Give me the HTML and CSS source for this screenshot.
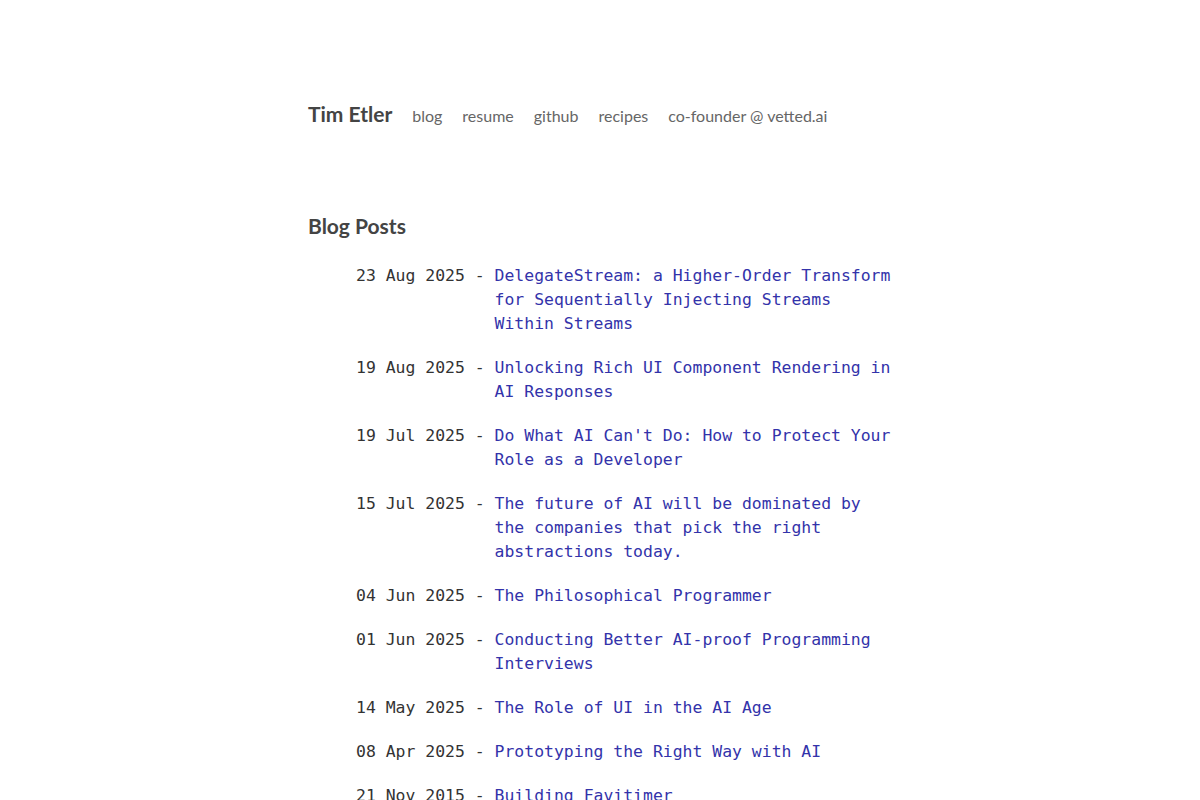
FILE: index.html
```html
<!DOCTYPE html>
<html lang="en">
<head>
<meta charset="utf-8">
<title>Tim Etler</title>
<link rel="stylesheet" href="styles.css">
</head>
<body>
<div class="page">
  <header class="site-header">
    <a class="site-title" href="#">Tim Etler</a>
    <nav class="site-nav">
      <a href="#">blog</a>
      <a href="#">resume</a>
      <a href="#">github</a>
      <a href="#">recipes</a>
      <a href="#">co-founder @ vetted.ai</a>
    </nav>
  </header>
  <main>
    <h2 class="section-title">Blog Posts</h2>
    <ul class="posts">
      <li><span class="date">23 Aug 2025 -&nbsp;</span><a href="#">DelegateStream: a Higher-Order Transform for Sequentially Injecting Streams Within Streams</a></li>
      <li><span class="date">19 Aug 2025 -&nbsp;</span><a href="#">Unlocking Rich UI Component Rendering in AI Responses</a></li>
      <li><span class="date">19 Jul 2025 -&nbsp;</span><a href="#">Do What AI Can't Do: How to Protect Your Role as a Developer</a></li>
      <li><span class="date">15 Jul 2025 -&nbsp;</span><a href="#">The future of AI will be dominated by the companies that pick the right abstractions today.</a></li>
      <li><span class="date">04 Jun 2025 -&nbsp;</span><a href="#">The Philosophical Programmer</a></li>
      <li><span class="date">01 Jun 2025 -&nbsp;</span><a href="#">Conducting Better AI-proof Programming Interviews</a></li>
      <li><span class="date">14 May 2025 -&nbsp;</span><a href="#">The Role of UI in the AI Age</a></li>
      <li><span class="date">08 Apr 2025 -&nbsp;</span><a href="#">Prototyping the Right Way with AI</a></li>
      <li><span class="date">21 Nov 2015 -&nbsp;</span><a href="#">Building Favitimer</a></li>
    </ul>
  </main>
</div>
</body>
</html>
```
FILE: styles.css
```css
html, body {
  margin: 0;
  padding: 0;
  background: #fff;
}
body {
  font-family: "Lato", "Open Sans", sans-serif;
  color: #333;
}
.page {
  width: 584px;
  margin: 0 auto;
  padding: 102px 8px 40px;
}
.site-header {
  display: flex;
  align-items: baseline;
  gap: 20px;
  line-height: 24px;
}
.site-title {
  font-size: 21px;
  font-weight: 700;
  color: #444;
  text-decoration: none;
}
.site-nav {
  display: flex;
  gap: 20px;
  font-size: 16px;
}
.site-nav a {
  color: #666;
  text-decoration: none;
}
.section-title {
  margin: 86px 0 0;
  font-size: 21px;
  font-weight: 700;
  line-height: 24px;
  color: #444;
}
.posts {
  list-style: none;
  margin: 26px 0 0;
  padding: 0 0 0 48px;
  font-family: "DejaVu Sans Mono", monospace;
  font-size: 16.45px;
  line-height: 24px;
}
.posts li {
  display: flex;
  margin-bottom: 20px;
}
.date {
  flex: none;
  color: #333;
  white-space: pre;
}
.posts a {
  color: #3333aa;
  text-decoration: none;
}
```
